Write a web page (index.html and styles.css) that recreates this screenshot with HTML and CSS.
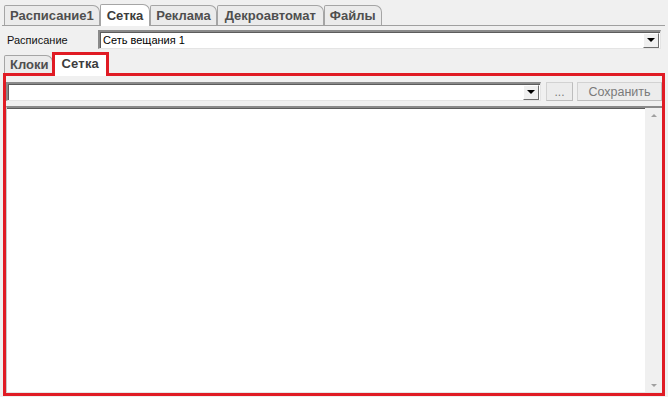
FILE: index.html
```html
<!DOCTYPE html>
<html lang="ru">
<head>
    <meta charset="UTF-8">
    <title>Сетка</title>
    <link rel="stylesheet" href="styles.css">
</head>
<body>
    <div class="tabs top-tabs">
        <div class="tab">Расписание1</div>
        <div class="tab active">Сетка</div>
        <div class="tab">Реклама</div>
        <div class="tab wide">Декроавтомат</div>
        <div class="tab">Файлы</div>
    </div>

    <div class="field-row">
        <label class="field-label">Расписание</label>
        <div class="combo schedule-combo">
            <span class="combo-text">Сеть вещания 1</span>
            <span class="combo-btn"><span class="arrow"></span></span>
        </div>
    </div>

    <div class="tabs inner-tabs">
        <div class="tab">Клоки</div>
        <div class="tab active marked">Сетка</div>
    </div>

    <div class="panel">
        <div class="toolbar">
            <div class="combo grid-combo">
                <span class="combo-text"></span>
                <span class="combo-btn"><span class="arrow"></span></span>
            </div>
            <button class="btn dots">...</button>
            <button class="btn save">Сохранить</button>
        </div>
        <div class="memo">
            <div class="memo-body"></div>
            <div class="scrollbar">
                <span class="scroll-arrow up"></span>
                <span class="scroll-arrow down"></span>
            </div>
        </div>
    </div>
</body>
</html>
```

FILE: styles.css
```css
* {
    box-sizing: border-box;
    margin: 0;
    padding: 0;
}
body {
    background: #f0f0f0;
    font-family: 'Liberation Sans', Arial, sans-serif;
    font-size: 11px;
    color: #000;
    width: 668px;
    height: 397px;
    overflow: hidden;
}

/* Вкладки */
.tabs {
    display: flex;
    align-items: flex-end;
}
.top-tabs {
    margin: 3px 3px 0 2px;
    padding-left: 2px;
    height: 23px;
    border-bottom: 1px solid #a0a0a0;
}
.tab {
    height: 20px;
    padding: 0 5px;
    border: 1px solid #a5a5a5;
    border-bottom: none;
    border-radius: 2px 7px 0 0;
    background: #ebebeb;
    color: #4f4f4f;
    font-weight: bold;
    font-size: 13px;
    line-height: 19px;
    white-space: nowrap;
}
.tab.active {
    height: 22px;
    margin-bottom: -1px;
    background: #fff;
    color: #3c3c3c;
    padding: 1px 6px 0;
}
.tab.wide {
    padding: 0 7px;
}

/* Строка расписания */
.field-row {
    display: flex;
    align-items: center;
    height: 26px;
    padding: 1px 7px 0 7px;
}
.field-label {
    width: 91px;
    color: #111;
}
.combo {
    display: flex;
    align-items: center;
    height: 19px;
    background: #fff;
    border-top: 2px solid #8a8a8a;
    border-left: 2px solid #8a8a8a;
    border-right: 1px solid #e4e4e4;
    border-bottom: 1px solid #e4e4e4;
    box-shadow: inset 1px 1px 0 #5c5c5c;
}
.schedule-combo {
    width: 563px;
}
.combo-text {
    flex: 1;
    padding-left: 3px;
    line-height: 16px;
    white-space: nowrap;
}
.combo-btn {
    width: 16px;
    height: 15px;
    margin-right: 1px;
    background: #f0f0f0;
    border: 1px solid #fff;
    border-right-color: #6f6f6f;
    border-bottom-color: #6f6f6f;
    display: flex;
    align-items: center;
    justify-content: center;
}
.arrow {
    width: 0;
    height: 0;
    border-left: 4px solid transparent;
    border-right: 4px solid transparent;
    border-top: 4px solid #000;
}

/* Вложенные вкладки */
.inner-tabs {
    margin-left: 4px;
    height: 21px;
    position: relative;
    z-index: 1;
}
.inner-tabs .tab {
    height: 18px;
    line-height: 17px;
    padding: 0 4px 0 5px;
}
.inner-tabs .tab.marked {
    height: 24px;
    margin-left: -1px;
    margin-bottom: -3px;
    padding: 0 7px 0 6px;
    border: 3px solid #e01b24;
    border-bottom: none;
    border-radius: 0;
    background: #fff;
    line-height: 17px;
    letter-spacing: 0.2px;
}

/* Панель с красной рамкой */
.panel {
    margin-left: 3px;
    width: 662px;
    height: 323px;
    border: 3px solid #e01b24;
    display: flex;
    flex-direction: column;
    padding-top: 6px;
}
.toolbar {
    display: flex;
    align-items: center;
    gap: 5px;
    height: 19px;
}
.grid-combo {
    width: 535px;
}
.btn {
    height: 19px;
    background: #ececec;
    border: 1px solid #d2d2d2;
    border-right-color: #bdbdbd;
    border-bottom-color: #bdbdbd;
    color: #7a7a7a;
    font-family: 'Liberation Sans', Arial, sans-serif;
    font-size: 12px;
    line-height: 16px;
}
.dots {
    width: 27px;
}
.save {
    width: 85px;
    font-size: 12.5px;
    margin-left: -1px;
}
.memo {
    flex: 1;
    margin-top: 5px;
    display: flex;
    background: #fff;
    border-top: 2px solid #8a8a8a;
    border-left: 1px solid #c8c8c8;
    box-shadow: inset 0 1px 0 #5c5c5c;
    border-bottom: 1px solid #e6e6e6;
}
.memo-body {
    flex: 1;
}
.scrollbar {
    width: 17px;
    background: #f0f0f0;
    display: flex;
    flex-direction: column;
    justify-content: space-between;
    align-items: center;
    padding: 6px 0 5px;
}
.scroll-arrow {
    width: 0;
    height: 0;
    border-left: 3px solid transparent;
    border-right: 3px solid transparent;
}
.scroll-arrow.up {
    border-bottom: 3px solid #a0a0a0;
}
.scroll-arrow.down {
    border-top: 3px solid #a0a0a0;
}
```
